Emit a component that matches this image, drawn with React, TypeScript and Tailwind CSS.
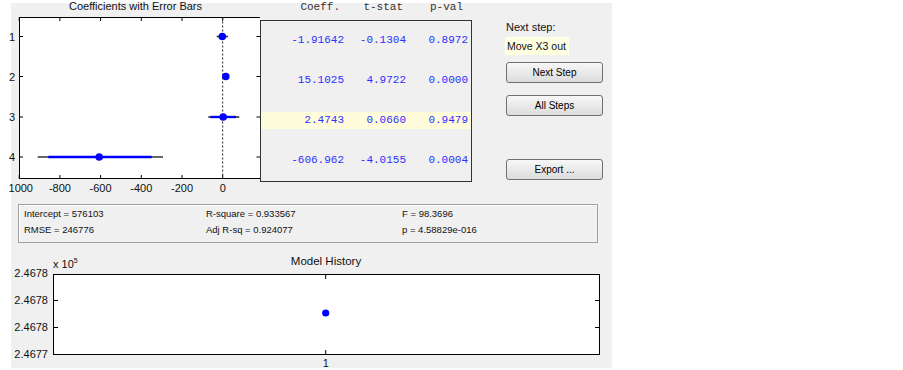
const sans = "font-['Liberation_Sans',Arial,sans-serif]";
const mono = "font-['Liberation_Mono','Courier_New',monospace]";

// data -> x pixel inside the coefficient plot
const sx = (v: number) => 211.7 + v * 0.2035;

const bars = [
  { y: 19.5, black: [205.7, 217], blue: [208, 215], dot: 211.3 },
  { y: 59.5, black: [212, 218], blue: [213, 217], dot: 214.8 },
  { y: 100, black: [197.3, 228.3], blue: [199.5, 225], dot: 212.2 },
  { y: 140, black: [26.7, 152], blue: [37.3, 140.7], dot: 88.2 },
];

const rows = [
  { c: "-1.91642", t: "-0.1304", p: "0.8972" },
  { c: "15.1025", t: "4.9722", p: "0.0000" },
  { c: "2.4743", t: "0.0660", p: "0.9479", hl: true },
  { c: "-606.962", t: "-4.0155", p: "0.0004" },
];

function CoeffPlot() {
  const xt = [-1000, -800, -600, -400, -200, 0];
  return (
    <svg width="249" height="180" className="block overflow-visible">
      <rect x="8.5" y="0.5" width="241" height="161" fill="#fff" />
      <line x1="8.5" y1="0" x2="8.5" y2="162" stroke="#000" />
      <line x1="8" y1="0.5" x2="249" y2="0.5" stroke="#000" />
      <line x1="8" y1="161.5" x2="249" y2="161.5" stroke="#000" />
      {xt.map((v) => (
        <g key={v}>
          <line x1={sx(v)} y1="0.5" x2={sx(v)} y2="4" stroke="#000" />
          <line x1={sx(v)} y1="161.5" x2={sx(v)} y2="158" stroke="#000" />
        </g>
      ))}
      {bars.map((b) => (
        <g key={b.y}>
          <line x1="8.5" y1={b.y} x2="12" y2={b.y} stroke="#000" />
          <line x1="245.5" y1={b.y} x2="249" y2={b.y} stroke="#000" />
        </g>
      ))}
      <line x1="211.7" y1="0.5" x2="211.7" y2="161.5" stroke="#222" strokeDasharray="2 2" />
      {bars.map((b) => (
        <g key={"b" + b.y}>
          <line x1={b.black[0]} y1={b.y} x2={b.black[1]} y2={b.y} stroke="#333" strokeWidth="1.6" />
          <line x1={b.blue[0]} y1={b.y} x2={b.blue[1]} y2={b.y} stroke="#0000ff" strokeWidth="2.4" />
          <circle cx={b.dot} cy={b.y} r="3.8" fill="#0000ff" />
        </g>
      ))}
      <g fontSize="11" fill="#111" fontFamily="'Liberation Sans', Arial, sans-serif">
        {bars.map((b, i) => (
          <text key={i} x="4" y={b.y + 4} textAnchor="end">
            {i + 1}
          </text>
        ))}
        <text x="22" y="175" textAnchor="end">1000</text>
        {xt.slice(1).map((v) => (
          <text key={v} x={sx(v)} y="175" textAnchor="middle">
            {v}
          </text>
        ))}
      </g>
    </svg>
  );
}

function HistoryPlot() {
  const labels = [
    { y: 0, t: "2.4678" },
    { y: 27, t: "2.4678" },
    { y: 54, t: "2.4678" },
    { y: 81, t: "2.4677" },
  ];
  return (
    <svg width="601" height="95" className="block overflow-visible">
      <rect x="42.5" y="1.5" width="546" height="80" fill="#fff" stroke="#000" />
      {[27.5, 54.5].map((y) => (
        <g key={y}>
          <line x1="42.5" y1={y} x2="47" y2={y} stroke="#000" />
          <line x1="588.5" y1={y} x2="584" y2={y} stroke="#000" />
        </g>
      ))}
      <line x1="314.7" y1="1.5" x2="314.7" y2="6" stroke="#000" />
      <line x1="314.7" y1="81.5" x2="314.7" y2="77" stroke="#000" />
      <circle cx="314.7" cy="40" r="3.6" fill="#0000ff" />
      <g fontSize="11" fill="#111" fontFamily="'Liberation Sans', Arial, sans-serif">
        {labels.map((l, i) => (
          <text key={i} x="37" y={l.y + 4} textAnchor="end">
            {l.t}
          </text>
        ))}
        <text x="314.7" y="94" textAnchor="middle">1</text>
      </g>
    </svg>
  );
}

function Btn({ label, className }: { label: string; className: string }) {
  return (
    <div
      className={`flex h-[21px] w-[97px] items-center justify-center rounded-[3px] border border-[#707070] bg-gradient-to-b from-[#f7f7f7] to-[#dcdcdc] text-[10px] text-black ${className}`}
    >
      {label}
    </div>
  );
}

export default function App() {
  return (
    <div className={`min-h-screen bg-white pl-[11px] pt-[3px] ${sans}`}>
      <div className="flex h-[365px] w-[601px] flex-col bg-[#f0f0f0]">
        <div className="flex h-[197px]">
          <div className="w-[249px] shrink-0">
            <div className="h-[17px] text-center">
              <div className="-mt-[3px] text-[11px] leading-[12px] text-[#111]">
                Coefficients with Error Bars
              </div>
            </div>
            <CoeffPlot />
          </div>

          <div className="w-[212px] shrink-0">
            <div className={`grid h-[17px] grid-cols-[84px_62px_62px] text-right text-[11px] text-[#333] ${mono}`}>
              <div className="-mt-[2px] pr-[4px] leading-[12px]">Coeff.</div>
              <div className="-mt-[2px] pr-[3px] leading-[12px]">t-stat</div>
              <div className="-mt-[2px] pr-[5px] leading-[12px]">p-val</div>
            </div>
            <div className={`flex h-[162px] flex-col border border-[#333] text-[11px] text-[#2f2fff] ${mono}`}>
              {rows.map((r) => (
                <div key={r.c} className="flex h-[40px] items-center pb-[2px]">
                  <div
                    className={`grid h-[17px] w-full grid-cols-[83px_62px_62px] items-center text-right leading-[17px] ${
                      r.hl ? "bg-[#fffcdc]" : ""
                    }`}
                  >
                    <div>{r.c}</div>
                    <div>{r.t}</div>
                    <div>{r.p}</div>
                  </div>
                </div>
              ))}
            </div>
          </div>

          <div className="flex flex-1 flex-col pl-[33px] text-[#111]">
            <div className="mt-[17px] pl-[1px] text-[11px] leading-[14px]">Next step:</div>
            <div className="mt-[3px] h-[18px] w-[64px] whitespace-nowrap bg-[#ffffe1] pl-[2px] text-[10.5px] leading-[18px]">
              Move X3 out
            </div>
            <Btn label="Next Step" className="ml-[1px] mt-[7px]" />
            <Btn label="All Steps" className="ml-[1px] mt-[12px]" />
            <Btn label="Export ..." className="ml-[1px] mt-[43px]" />
          </div>
        </div>

        <div className="ml-[7px] mt-[4px] h-[39px] w-[580px] border border-[#a0a0a0] pl-[5px] pt-[1px] text-[9.5px] leading-[16px] text-[#111] shadow-[inset_1px_1px_0_#fff]">
          <div className="grid grid-cols-[182px_196px_1fr]">
            <div>Intercept = 576103</div>
            <div>R-square = 0.933567</div>
            <div>F = 98.3696</div>
            <div>RMSE = 246776</div>
            <div>Adj R-sq = 0.924077</div>
            <div>p = 4.58829e-016</div>
          </div>
        </div>

        <div className="mt-[12px] grid h-[18px] w-[588px] grid-cols-[1fr_auto_1fr] items-start pl-[42px] text-[#111]">
          <div className="mt-[3px] text-[11px] leading-[12px]">
            x 10<sup className="-top-[5px] text-[7px]">5</sup>
          </div>
          <div className="text-[11.5px] leading-[12px]">Model History</div>
          <div />
        </div>

        <HistoryPlot />
      </div>
    </div>
  );
}
